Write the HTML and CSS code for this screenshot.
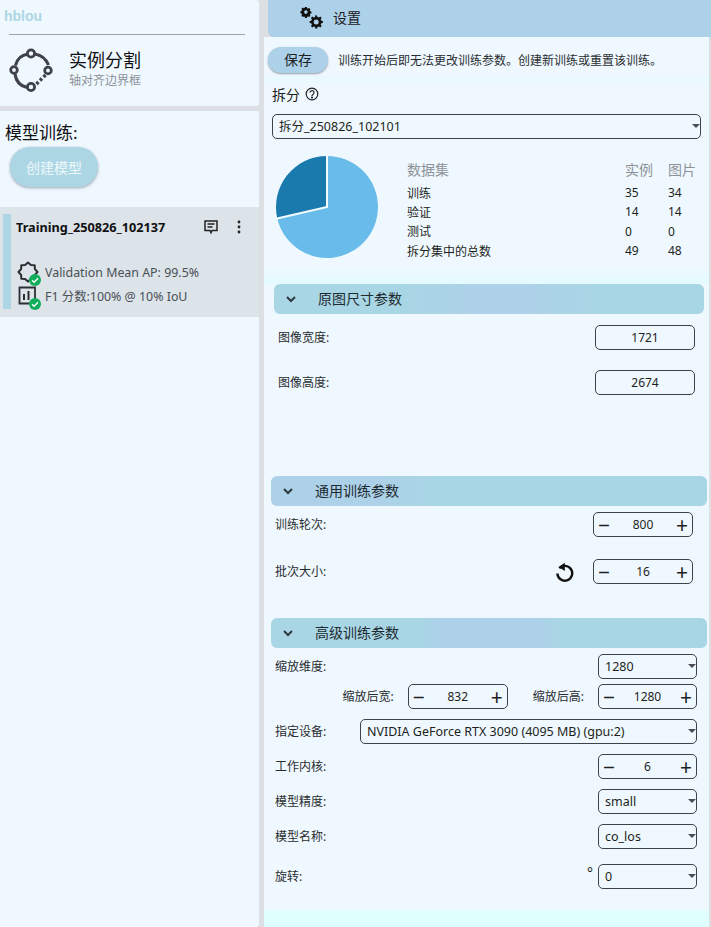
FILE: index.html
```html
<!DOCTYPE html>
<html lang="zh">
<head>
<meta charset="utf-8">
<title>设置</title>
<link rel="stylesheet" href="styles.css">
</head>
<body>
<div class="app">
  <aside class="sidebar">
    <section class="card card-top">
      <div class="brand">hblou</div>
      <hr class="rule">
      <div class="task">
        <svg class="task-icon" viewBox="0 0 46 46" width="46" height="46" fill="none" stroke="#3f4347" stroke-width="3.200">
          <path d="M19 7C12 8 8 12 6.500 18.500M6 27C7 34 11 39 18 40.500M26 7C32 8 37 12 39.500 18"/>
          <path d="M36.500 28L27 37.500" stroke-width="3.400" stroke-dasharray="2.800 2.200"/>
          <circle cx="22" cy="6.500" r="3.600" stroke-width="2.800"/><circle cx="5" cy="23" r="3.300" stroke-width="2.800"/><circle cx="39" cy="23.500" r="3.300" stroke-width="2.800"/><circle cx="22" cy="40" r="3.600" stroke-width="2.800"/>
        </svg>
        <div class="task-text">
          <div class="task-title">实例分割</div>
          <div class="task-sub">轴对齐边界框</div>
        </div>
      </div>
    </section>
    <section class="card card-models">
      <h2 class="models-title">模型训练:</h2>
      <button class="create-btn">创建模型</button>
      <div class="train-item">
        <div class="train-accent"></div>
        <div class="train-body">
          <div class="train-head">
            <span class="train-name">Training_250826_102137</span>
            <svg class="comment-icon" viewBox="0 0 16 16" width="16" height="16" fill="none" stroke="#222" stroke-width="1.500">
              <path d="M2 2h12v9.500H9l-1 2.200-1-2.200H2z"/><path d="M4.500 5h7M4.500 8h5"/>
            </svg>
            <svg class="kebab-icon" viewBox="0 0 4 14" width="4" height="14" fill="#222">
              <circle cx="2" cy="2" r="1.400"/><circle cx="2" cy="7" r="1.400"/><circle cx="2" cy="12" r="1.400"/>
            </svg>
          </div>
          <div class="metric metric-first">
            <span class="metric-icon">
              <svg viewBox="0 0 22 22" width="22" height="22" fill="none" stroke="#2b2f33" stroke-width="2" stroke-linejoin="round">
                <path d="M20.500 11L17.900 13.900 17.700 17.700 13.900 17.900 11 20.500 8.100 17.900 4.300 17.700 4.100 13.900 1.500 11 4.100 8.100 4.300 4.300 8.100 4.100 11 1.500 13.900 4.100 17.700 4.300 17.900 8.100z"/>
              </svg>
              <svg class="check" viewBox="0 0 12 12" width="12" height="12"><circle cx="6" cy="6" r="6" fill="#12ad5b"/><path d="M3 6.200l2.100 2.100L9 4.200" fill="none" stroke="#fff" stroke-width="1.300"/></svg>
            </span>
            <span>Validation Mean AP: 99.5%</span>
          </div>
          <div class="metric">
            <span class="metric-icon">
              <svg viewBox="0 0 22 22" width="22" height="22" fill="none" stroke="#2b2f33" stroke-width="1.800">
                <path d="M2.500 2.500h15.500v16H2.500z"/><path d="M7 15V9M11.500 15V6" stroke-width="2"/>
              </svg>
              <svg class="check" viewBox="0 0 12 12" width="12" height="12"><circle cx="6" cy="6" r="6" fill="#12ad5b"/><path d="M3 6.200l2.100 2.100L9 4.200" fill="none" stroke="#fff" stroke-width="1.300"/></svg>
            </span>
            <span>F1 分数:100% @ 10% IoU</span>
          </div>
        </div>
      </div>
    </section>
  </aside>

  <main class="main">
    <header class="topbar">
      <svg class="gears" viewBox="0 0 24 24" width="24" height="24" fill="#111">
        <path d="M16.200 9.500l1.600-.2.700 1.700 1.500.6 1.300-1 1.400 1.400-1 1.300.6 1.500 1.600.2v2l-1.600.2-.6 1.500 1 1.300-1.400 1.400-1.300-1-1.500.6-.2 1.600h-2l-.2-1.600-1.500-.6-1.300 1-1.400-1.400 1-1.300-.6-1.500-1.600-.2v-2l1.600-.2.600-1.500-1-1.300 1.400-1.400 1.300 1 1.500-.6zM17.200 13.500a2.500 2.500 0 1 0 0 5 2.500 2.500 0 0 0 0-5z" fill-rule="evenodd"/>
        <path d="M6 1h1.800l.3 1.200 1 .4 1-.6 1.300 1.300-.6 1 .4 1 1.200.3v1.800l-1.200.3-.4 1 .6 1-1.300 1.300-1-.6-1 .4-.3 1.200H6l-.3-1.200-1-.4-1 .6-1.300-1.300.6-1-.4-1L1.400 7V5.200l1.200-.3.4-1-.6-1L3.700 1.600l1 .6 1-.4zM6.900 4.300a1.800 1.800 0 1 0 0 3.600 1.800 1.800 0 0 0 0-3.600z" fill-rule="evenodd"/>
      </svg>
      <span class="topbar-title">设置</span>
    </header>
    <div class="save-row">
      <button class="save-btn">保存</button>
      <span class="save-note">训练开始后即无法更改训练参数。创建新训练或重置该训练。</span>
    </div>
    <div class="panel">
      <div class="split-label">
        <span>拆分</span>
        <svg viewBox="0 0 14 14" width="14" height="14" fill="none" stroke="#222" stroke-width="1.200">
          <circle cx="7" cy="7" r="5.800"/><path d="M5 5.600a2 2 0 1 1 3.200 1.600c-.8.500-1.200.9-1.200 1.700"/><circle cx="7" cy="10.500" r=".5" fill="#222"/>
        </svg>
      </div>
      <div class="select select-split">拆分_250826_102101</div>

      <div class="stats">
        <svg class="pie" viewBox="0 0 104 104" width="104" height="104">
          <path d="M52 52L52 1A51 51 0 1 1 2.300 63.500Z" fill="#69bcea"/>
          <path d="M52 52L2.300 63.500A51 51 0 0 1 52 1Z" fill="#1a7aae"/>
          <path d="M52 0V52L1 63.800" fill="none" stroke="#f3fbff" stroke-width="2"/>
        </svg>
        <table class="stats-table">
          <thead>
            <tr><th>数据集</th><th>实例</th><th>图片</th></tr>
          </thead>
          <tbody>
            <tr><td>训练</td><td>35</td><td>34</td></tr>
            <tr><td>验证</td><td>14</td><td>14</td></tr>
            <tr><td>测试</td><td>0</td><td>0</td></tr>
            <tr><td>拆分集中的总数</td><td>49</td><td>48</td></tr>
          </tbody>
        </table>
      </div>

      <section class="group group-size">
        <div class="bar bar-center bar-narrow">
          <svg class="chev" viewBox="0 0 10 7" width="10" height="7"><path d="M1 1l4 4 4-4" fill="none" stroke="#2d3a40" stroke-width="2"/></svg>
          <span>原图尺寸参数</span>
        </div>
        <div class="field field-a"><span class="label">图像宽度:</span><div class="value-box">1721</div></div>
        <div class="field field-b"><span class="label">图像高度:</span><div class="value-box">2674</div></div>
      </section>

      <section class="group group-general">
        <div class="bar bar-left">
          <svg class="chev" viewBox="0 0 10 7" width="10" height="7"><path d="M1 1l4 4 4-4" fill="none" stroke="#2d3a40" stroke-width="2"/></svg>
          <span>通用训练参数</span>
        </div>
        <div class="field field-c">
          <span class="label">训练轮次:</span>
          <div class="stepper"><span class="sign">−</span><span>800</span><span class="sign">+</span></div>
        </div>
        <div class="field field-d">
          <span class="label">批次大小:</span>
          <div class="field-end">
            <svg class="reset" viewBox="0 0 20 22" width="20" height="22" fill="none" stroke="#111" stroke-width="2.400">
              <path d="M5.300 7.300a7.400 7.400 0 1 1-1.900 5.200"/><path d="M10.800 1.800v8.200L4.600 5.900z" fill="#111" stroke="none"/>
            </svg>
            <div class="stepper"><span class="sign">−</span><span>16</span><span class="sign">+</span></div>
          </div>
        </div>
      </section>

      <section class="group group-advanced">
        <div class="bar bar-mid">
          <svg class="chev" viewBox="0 0 10 7" width="10" height="7"><path d="M1 1l4 4 4-4" fill="none" stroke="#2d3a40" stroke-width="2"/></svg>
          <span>高级训练参数</span>
        </div>
        <div class="field field-e"><span class="label">缩放维度:</span><div class="select select-sm">1280</div></div>
        <div class="field field-f">
          <div class="pair pair-w"><span class="label">缩放后宽:</span><div class="stepper"><span class="sign">−</span><span>832</span><span class="sign">+</span></div></div>
          <div class="pair pair-h"><span class="label">缩放后高:</span><div class="stepper stepper-sm"><span class="sign">−</span><span>1280</span><span class="sign">+</span></div></div>
        </div>
        <div class="field field-g"><span class="label">指定设备:</span><div class="select select-device">NVIDIA GeForce RTX 3090 (4095 MB) (gpu:2)</div></div>
        <div class="field field-g"><span class="label">工作内核:</span><div class="stepper stepper-sm"><span class="sign">−</span><span>6</span><span class="sign">+</span></div></div>
        <div class="field field-g"><span class="label">模型精度:</span><div class="select select-sm">small</div></div>
        <div class="field field-g"><span class="label">模型名称:</span><div class="select select-sm">co_los</div></div>
        <div class="field field-h">
          <span class="label">旋转:</span>
          <div class="field-end field-end-tight"><span class="degree">°</span><div class="select select-sm">0</div></div>
        </div>
      </section>
    </div>
  </main>
</div>
</body>
</html>
```
FILE: styles.css
```css
* { box-sizing: border-box; }
html, body { margin: 0; padding: 0; height: 100%; }
body {
  background: #dcdfe3;
  font-family: "Noto Sans", "Noto Sans CJK SC", sans-serif;
  color: #1d1f21;
  overflow: hidden;
}
.app { display: flex; width: 711px; height: 927px; }

/* Sidebar */
.sidebar { width: 259px; display: flex; flex-direction: column; gap: 5px; flex: none; }
.card { background: #eff8ff; border-radius: 0 3px 3px 0; }
.card-top { height: 106px; padding: 9px 14px 0 4px; }
.brand { font-family: "Liberation Sans", sans-serif; font-weight: 700; font-size: 14px; line-height: 15px; color: #add6e4; }
.rule { border: 0; border-top: 1px solid #9aa2a9; margin: 10px 0 0 5px; }
.task { display: flex; align-items: center; margin: 9px 0 0 5px; }
.task-icon { flex: none; margin-top: 3px; }
.task-text { margin-left: 14px; }
.task-title { font-size: 18px; line-height: 24px; color: #111; }
.task-sub { font-size: 12px; line-height: 18px; color: #8d9298; }
.card-models { flex: 1; padding-top: 11px; }
.models-title { margin: 0 0 0 5px; font-size: 17px; line-height: 22px; font-weight: 400; color: #111; }
.create-btn {
  display: block; margin: 3px 0 0 10px; width: 88px; height: 40px; border: 0; border-radius: 20px;
  background: #add6e4; color: #eef8fc; font: inherit; font-size: 14px;
  box-shadow: 0 1px 3px rgba(60, 70, 80, .45);
}
.train-item { display: flex; margin-top: 20px; height: 110px; padding: 7px 0 8px 3px; background: #dce3e9; }
.train-accent { width: 8px; background: #add6e4; flex: none; }
.train-body { flex: 1; padding: 0 18px 0 5px; min-width: 0; }
.train-head { display: flex; align-items: center; height: 14px; margin-top: 6px; }
.train-name { font-weight: 700; font-size: 12.700px; color: #111; flex: 1; white-space: nowrap; }
.comment-icon { margin-right: 18px; }
.metric { display: flex; align-items: center; height: 24px; font-size: 12.400px; color: #4a5056; }
.metric-first { margin-top: 26px; }
.metric-icon { position: relative; width: 24px; height: 22px; margin-right: 4px; margin-left: 1px; flex: none; }
.check { position: absolute; right: 0; bottom: -3px; }

/* Main */
.main { margin-left: 5px; width: 445px; flex: none; display: flex; flex-direction: column; }
.topbar { margin-left: 4px; margin-right: -2px; height: 37px; background: #acd1e8; border-radius: 0 0 0 6px; display: flex; align-items: center; padding-left: 31px; }
.gears { margin-top: -2px; }
.topbar-title { margin-left: 10px; font-size: 14px; line-height: 18px; margin-top: -2px; color: #1c2024; }
.save-row { height: 40px; background: #eff8ff; display: flex; align-items: center; padding: 6px 0 0 4px; }
.save-btn { width: 60px; height: 26px; border: 0; border-radius: 13px; background: #acd1e8; font: inherit; font-size: 14px; line-height: 24px; color: #1d2125; box-shadow: 0 1px 2px rgba(60, 70, 80, .5); padding: 0; }
.save-note { margin-left: 10px; font-size: 12px; color: #2a2d30; white-space: nowrap; }
.panel {
  flex: 1;
  background: linear-gradient(#e6faff 0, #eff8ff 10px, #eff8ff 190px, #e4faff 203px, #e4faff 207px, #eff8ff 208px, #eff8ff 831px, #dfffff 836px);
}
.split-label { display: flex; align-items: center; gap: 5px; padding: 2px 0 0 8px; height: 32px; font-size: 14px; color: #1d1f21; }
.select {
  position: relative; height: 25px; line-height: 23px; padding-left: 6px; border: 1px solid #3d4348; border-radius: 5px;
  font-size: 12.500px; color: #1d1f21; white-space: nowrap;
}
.select::after {
  content: ""; position: absolute; right: 0; top: 9px; border-style: solid; border-color: #4a4e52 transparent transparent; border-width: 4px 4px 0;
}
.select-split { margin: 5px 8px 0; width: 429px; }
.select-sm { width: 99px; }
.select-device { width: 337px; }
.stats { display: flex; align-items: flex-start; padding: 16px 0 0 11px; height: 145px; }
.pie { flex: none; }
.stats-table { margin: 0 0 0 28px; border-collapse: collapse; font-size: 12px; width: 290px; }
.stats-table th, .stats-table td { padding: 0; text-align: left; font-weight: 400; }
.stats-table th { color: #8d9298; font-size: 14px; height: 28px; }
.stats-table td { height: 19.300px; color: #1d1f21; }
.stats-table tr > :first-child { width: 218px; }
.stats-table tr > :nth-child(2) { width: 43px; }
.group { display: flex; flex-direction: column; }
.group-size { margin: 0 5px 0 10px; height: 192px; }
.group-general { margin: 0 2px 0 7px; height: 142px; }
.group-advanced { margin: 0 2px 0 7px; }
.bar { height: 30px; border-radius: 6px; display: flex; align-items: center; padding-left: 12px; font-size: 14px; line-height: 18px; color: #1d2a30; }
.bar span { margin-left: 22px; }
.bar-center { background: linear-gradient(90deg, #a9d6e5 30%, #acd1e8 45%, #acd1e8 60%, #a9d6e5 75%); }
.bar-left { background: linear-gradient(90deg, #acd1e8 0, #acd1e8 25%, #a9d6e5 37%); }
.bar-mid { background: linear-gradient(90deg, #a9d6e5 34%, #acd1e8 38%, #acd1e8 62%, #a9d6e5 66%); }
.field { display: flex; align-items: center; justify-content: space-between; font-size: 12px; }
.label { color: #2a2d30; white-space: nowrap; margin-left: 4px; margin-top: -2px; }
.value-box { width: 100px; height: 25px; line-height: 23px; text-align: center; border: 1px solid #3d4348; border-radius: 5px; font-size: 12px; margin-right: 9px; }
.field-a { margin-top: 11px; }
.field-b { margin-top: 20px; }
.stepper { width: 100px; height: 25px; display: flex; align-items: center; justify-content: space-between; padding: 0 4px; border: 1px solid #3d4348; border-radius: 5px; font-size: 12px; flex: none; }
.stepper-sm { width: 99px; }
.sign { font-size: 21px; line-height: 20px; color: #1d1f21; }
.field-c { margin-top: 6px; padding-right: 14px; }
.field-d { margin-top: 22px; padding-right: 14px; }
.field-end { display: flex; align-items: center; gap: 19px; }
.field-end-tight { gap: 5px; }
.field-e { margin-top: 6px; padding-right: 10px; }
.field-f { margin-top: 5px; padding-right: 10px; justify-content: flex-end; }
.pair { display: flex; align-items: center; }
.pair .label { margin: -2px 14px 0 0; }
.pair-w { margin-right: 25px; }
.field-g { margin-top: 10px; padding-right: 10px; }
.field-h { margin-top: 15px; padding-right: 10px; }
.degree { font-size: 14px; line-height: 14px; margin-top: -8px; color: #1d1f21; }
```
